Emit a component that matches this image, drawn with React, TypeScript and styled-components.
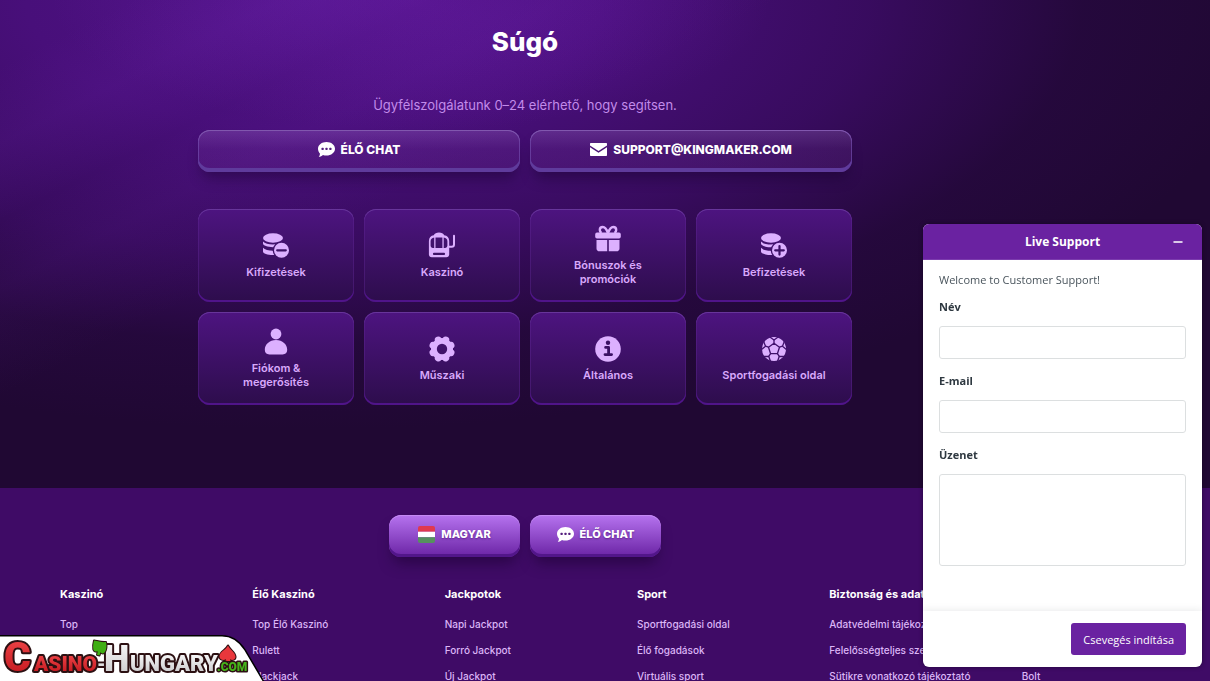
import React, { ReactNode } from 'react';
import styled, { createGlobalStyle } from 'styled-components';

const GlobalStyle = createGlobalStyle`
  *, *::before, *::after { box-sizing: border-box; }
  body { margin: 0; background: #3f0b66; font-family: Inter, 'Open Sans', sans-serif; color: #fff; }
  a { color: inherit; text-decoration: none; }
  button { font-family: inherit; cursor: pointer; }
  h1, h2, p, ul { margin: 0; padding: 0; }
  ul { list-style: none; }
`;

const Page = styled.div`
  display: flex;
  flex-direction: column;
  height: 100vh;
  overflow: hidden;
`;

const Main = styled.main`
  flex: none;
  padding: 24px 160px 83px 0;
  background:
    linear-gradient(153deg, transparent 6%, rgba(120, 40, 190, 0.1) 13%, transparent 20%, rgba(120, 40, 190, 0.08) 26%, transparent 36%),
    radial-gradient(ellipse 360px 130px at 34% 0, rgba(112, 30, 176, 0.4), transparent),
    radial-gradient(ellipse 960px 430px at 26% 0, #4f1486 0%, #480f7a 30%, rgba(60, 12, 102, 0.85) 58%, rgba(44, 9, 74, 0.4) 80%, transparent 100%),
    #200833;
`;

const Content = styled.div`
  display: flex;
  flex-direction: column;
  align-items: center;
  max-width: 654px;
  margin: 0 auto;
`;

const Title = styled.h1`
  font-size: 26px;
  line-height: 36px;
  font-weight: 800;
`;

const Lead = styled.p`
  margin-top: 36px;
  font-size: 13px;
  line-height: 18px;
  color: #c28bea;
`;

const Contacts = styled.div`
  display: grid;
  grid-template-columns: 1fr 1fr;
  gap: 10px;
  width: 100%;
  margin-top: 16px;
`;

const ContactLink = styled.a`
  display: flex;
  align-items: center;
  justify-content: center;
  gap: 6px;
  height: 42px;
  padding-bottom: 3px;
  border-radius: 12px;
  background: linear-gradient(rgba(190, 140, 230, 0.24), rgba(150, 80, 190, 0.14) 45%, rgba(130, 60, 170, 0.16));
  box-shadow:
    inset 0 1px 0 #8157ae,
    inset 0 -4px 0 #5f3b9c,
    inset 0 0 0 1px rgba(120, 84, 180, 0.6),
    0 10px 14px -4px rgba(20, 2, 40, 0.45);
  font-size: 12px;
  font-weight: 800;
  text-transform: uppercase;
`;

const Topics = styled.ul`
  display: grid;
  grid-template-columns: repeat(4, 1fr);
  gap: 10px;
  width: 100%;
  margin-top: 37px;
`;

const TopicLink = styled.a`
  display: flex;
  flex-direction: column;
  align-items: center;
  justify-content: center;
  gap: 5px;
  height: 93px;
  padding: 0 20px;
  border-radius: 12px;
  background: linear-gradient(#4d1480, #2d0d4c);
  box-shadow: inset 0 1px 0 #67359a, inset 0 -2px 0 #50148a, inset 0 0 0 1px rgba(98, 40, 150, 0.4);
  font-size: 11px;
  line-height: 14px;
  font-weight: 600;
  text-align: center;
  color: #d9a9fb;
`;

const Footer = styled.footer`
  flex: 1 0 auto;
  background: #3f0b66;
`;

const FooterActions = styled.div`
  display: flex;
  justify-content: center;
  gap: 10px;
  padding: 27px 160px 0 0;
`;

const PillButton = styled.button`
  display: flex;
  align-items: center;
  justify-content: center;
  gap: 6px;
  width: 131px;
  height: 42px;
  padding: 0 0 4px;
  border: 0;
  border-radius: 12px;
  background: linear-gradient(#b673ef, #6a23a4);
  box-shadow: inset 0 1px 0 #c48af4, inset 0 -3px 0 #52168a, 0 10px 14px -4px rgba(26, 2, 46, 0.55);
  color: #fff;
  font-size: 11px;
  font-weight: 800;
  text-transform: uppercase;
  text-shadow: 0 1px 2px rgba(50, 0, 90, 0.5);
`;

const FooterNav = styled.nav`
  display: grid;
  grid-template-columns: repeat(6, 1fr);
  gap: 16px;
  padding: 28px 12px 16px 60px;
`;

const ColumnTitle = styled.h2`
  min-height: 18px;
  margin-bottom: 8px;
  font-size: 11px;
  line-height: 18px;
  font-weight: 700;
  white-space: nowrap;
`;

const FooterLink = styled.a`
  display: block;
  font-size: 10px;
  line-height: 26px;
  font-weight: 500;
  white-space: nowrap;
  color: #dcb6f7;
`;

const Sponsor = styled.a`
  position: fixed;
  left: 0;
  bottom: 0;
  height: 47px;
  svg { display: block; }
`;

const Widget = styled.section`
  position: fixed;
  right: 8px;
  bottom: 14px;
  width: 279px;
  border-radius: 6px;
  overflow: hidden;
  background: #fff;
  box-shadow: 0 0 4px rgba(10, 0, 20, 0.5);
  font-family: 'Open Sans', 'Noto Sans', sans-serif;
  color: #49545c;
`;

const WidgetHeader = styled.header`
  display: grid;
  grid-template-columns: 32px 1fr 32px;
  align-items: center;
  height: 36px;
  padding: 0 8px;
  background: #6a22a1;
  border-bottom: 1px solid #7c3cae;
  color: #fff;
`;

const WidgetTitle = styled.h2`
  grid-column: 2;
  font-size: 12px;
  line-height: 16px;
  font-weight: 700;
  text-align: center;
`;

const MinimizeButton = styled.button`
  display: flex;
  align-items: center;
  justify-content: center;
  height: 32px;
  padding: 0;
  border: 0;
  background: none;
  color: #fff;
`;

const WidgetBody = styled.div`
  display: flex;
  flex-direction: column;
  gap: 14px;
  padding: 12px 16px 45px;
  font-size: 11px;
  line-height: 16px;
`;

const Welcome = styled.p`
  margin-bottom: -3px;
`;

const Field = styled.label`
  display: flex;
  flex-direction: column;
  gap: 11px;
  font-weight: 700;
  color: #2f3941;
`;

const TextInput = styled.input`
  width: 100%;
  height: 33px;
  padding: 0 10px;
  border: 1px solid #dcdfe0;
  border-radius: 3px;
  background: #fff;
`;

const MessageInput = styled.textarea`
  display: block;
  width: 100%;
  height: 92px;
  padding: 8px 10px;
  border: 1px solid #dcdfe0;
  border-radius: 3px;
  background: #fff;
  resize: none;
`;

const WidgetFooter = styled.footer`
  display: flex;
  justify-content: flex-end;
  padding: 12px 16px;
  box-shadow: 0 0 8px rgba(40, 50, 60, 0.12);
`;

const SubmitButton = styled.button`
  height: 32px;
  padding: 0 12px;
  border: 0;
  border-radius: 3px;
  background: #6a22a1;
  color: #fff;
  font-size: 11px;
`;

const Icon = ({ children }: { children: ReactNode }) => (
  <svg width="28" height="28" viewBox="0 0 28 28" fill="#dcb0ff" aria-hidden="true">{children}</svg>
);

const Coins = ({ plus }: { plus?: boolean }) => {
  const id = plus ? 'coins-plus' : 'coins-minus';
  return (
    <Icon>
      <mask id={id}>
        <rect width="28" height="28" fill="#fff" />
        <circle cx="19.5" cy="18.3" r="8.8" fill="#000" />
      </mask>
      <g mask={`url(#${id})`}>
        <ellipse cx="11" cy="6" rx="10" ry="4.7" />
        <path d="M1 9.6c1.8 2 5.6 3 10 3 3.6 0 6.6-.7 8.6-2v4.600H11c-5.500 0-10-1.600-10-3.600z" />
        <path d="M1 15.800c1.800 2 5.600 3 10 3h3v4.200h-3c-5.500 0-10-1.600-10-3.600z" />
      </g>
      <circle cx="19.5" cy="18.3" r="7.5" />
      <path d={plus ? 'M15.200 18.300h8.600M19.500 14v8.600' : 'M15.200 18.300h8.600'} stroke="#3b1064" strokeWidth="2.2" strokeLinecap="round" />
    </Icon>
  );
};

const Slot = () => (
  <Icon>
    <path fillRule="evenodd" d="M5.800 3.200C6.600 1.300 8.500.5 11 .5s4.400.8 5.200 2.700c3.100.3 5 2.500 5 5.800v13.500c0 1.600-1.200 2.800-2.800 2.800H3.700C2.100 25.300.9 24.100.9 22.500V9c0-3.300 1.900-5.500 4.900-5.800zM6.200 5.500C4 5.700 2.600 7.200 2.600 9.200v4.300c0 1.500.9 2.400 2.400 2.400h1.200zM7.500 5.500v10.400h6.900V5.500zM15.700 5.500v10.400H17c1.500 0 2.400-.9 2.400-2.400V9.200c0-2-1.300-3.500-3.700-3.700zM6 20.800a1.100 1.100 0 0 0 0 2.200h10a1.100 1.100 0 0 0 0-2.200z" />
    <path d="M20.500 14.800h3.200c1.500 0 2.300-.8 2.300-2.300V3.700" fill="none" stroke="#dcb0ff" strokeWidth="2" strokeLinecap="round" />
  </Icon>
);

const Gift = () => (
  <Icon>
    <path d="M14 8C12.500 4 11 2 8.800 2 7 2 5.800 3.400 5.800 5c0 1.200.6 2.200 1.600 3M14 8c1.500-4 3-6 5.200-6 1.800 0 3 1.400 3 3 0 1.200-.6 2.200-1.600 3" fill="none" stroke="#dcb0ff" strokeWidth="2.4" />
    <rect x="1.200" y="7.600" width="25.600" height="6" rx="1.800" />
    <path d="M2.500 14.900h10.700v11.400H5.500c-1.700 0-3-1.200-3-2.900zM14.800 14.900h10.700v8.500c0 1.700-1.300 2.900-3 2.900h-7.700z" />
  </Icon>
);

const Person = () => (
  <Icon>
    <circle cx="14" cy="6" r="5.400" />
    <path d="M14 12c6.500 0 11.200 4.500 11.200 9.800 0 2.900-1.700 4.600-4.600 4.600H7.400c-2.900 0-4.600-1.700-4.600-4.600C2.800 16.500 7.500 12 14 12z" />
  </Icon>
);

const lobeAngles = [22.5, 67.5, 112.5, 157.5, 202.5, 247.5, 292.5, 337.5];
const Gear = () => (
  <Icon>
    <mask id="gear-hole">
      <rect width="28" height="28" fill="#fff" />
      <circle cx="14" cy="14" r="5.200" fill="#000" />
    </mask>
    <g mask="url(#gear-hole)">
      <circle cx="14" cy="14" r="11" />
      {lobeAngles.map((a) => (
        <circle key={a} cx="23.700" cy="14" r="3.500" transform={`rotate(${a} 14 14)`} />
      ))}
    </g>
  </Icon>
);

const Info = () => (
  <Icon>
    <circle cx="14" cy="14" r="12.800" />
    <circle cx="14" cy="7.800" r="2.200" fill="#3b1064" />
    <path d="M11.600 12.400h3v7M11 19.600h6.600" fill="none" stroke="#3b1064" strokeWidth="2.800" strokeLinecap="round" strokeLinejoin="round" />
  </Icon>
);

const Football = () => (
  <Icon>
    <mask id="ball-seams">
      <circle cx="14" cy="14" r="12" fill="#fff" />
      <g fill="none" stroke="#000" strokeWidth="1.300" strokeLinejoin="round">
        <path d="M14 8.200l5.500 4-2.100 6.500h-6.800l-2.100-6.500z" />
        <path d="M14 8.200V5M19.500 12.200l3-1M17.400 18.700l1.900 2.600M10.600 18.700l-1.900 2.600M8.500 12.200l-3-1" />
        <path d="M9.800 2L14 5l4.200-3M24.500 6l-2 5.200L27 15M24.500 21.500l-5.200-.2-2 5.700M10.700 27l-2-5.700-5.200.2M1 15l4.500-3.800-2-5.200" />
      </g>
    </mask>
    <rect width="28" height="28" mask="url(#ball-seams)" />
  </Icon>
);

const ChatBubble = () => (
  <svg width="17" height="17" viewBox="0 0 17 17" aria-hidden="true">
    <path d="M8.500 1C13.200 1 17 3.900 17 7.800s-3.800 6.800-8.500 6.800c-1.300 0-2.500-.2-3.600-.6C3.900 14.800 2.400 16 .8 16c.8-.9 1.200-2.200 1.100-3.400C.7 11.300 0 9.600 0 7.800 0 3.900 3.800 1 8.500 1z" fill="#fff" />
    <g fill="#55207f">
      <rect x="3.400" y="6.700" width="2.400" height="2.400" rx=".8" />
      <rect x="7.300" y="6.700" width="2.400" height="2.400" rx=".8" />
      <rect x="11.200" y="6.700" width="2.400" height="2.400" rx=".8" />
    </g>
  </svg>
);

const Envelope = () => (
  <svg width="17" height="17" viewBox="0 0 17 17" fill="#fff" aria-hidden="true">
    <path d="M1 2h15c.6 0 1 .4 1 1v1.500L8.500 10 0 4.500V3c0-.6.4-1 1-1z" />
    <path d="M0 6.200L8.500 11.700 17 6.200V14c0 .6-.4 1-1 1H1c-.6 0-1-.4-1-1z" />
  </svg>
);

const HungarianFlag = () => (
  <svg width="17" height="17" viewBox="0 0 17 17" aria-hidden="true">
    <clipPath id="flag-shape"><rect width="17" height="17" rx="2" /></clipPath>
    <g clipPath="url(#flag-shape)">
      <path fill="#e0394f" d="M0 0h17v5.700H0z" />
      <path fill="#fff" d="M0 5.700h17v5.600H0z" />
      <path fill="#56915e" d="M0 11.300h17V17H0z" />
    </g>
  </svg>
);

const SponsorLogo = () => (
  <svg width="268" height="47" viewBox="0 0 268 47" role="img" aria-label="Casino-Hungary.com">
    <defs>
      <linearGradient id="red-fill" x1="0" y1="0" x2="0" y2="1">
        <stop offset="0" stopColor="#f4494c" />
        <stop offset="1" stopColor="#bd1219" />
      </linearGradient>
      <linearGradient id="silver-fill" x1="0" y1="0" x2="0" y2="1">
        <stop offset="0" stopColor="#fff" />
        <stop offset="1" stopColor="#c4c4c6" />
      </linearGradient>
    </defs>
    <path d="M-2 1.800H222c10 0 17 5 23 14l20 34H-2z" fill="#fff" stroke="#000" strokeWidth="1.500" />
    <g fontFamily="Roboto, 'Liberation Sans', sans-serif" fontWeight="900" stroke="#2c1012" strokeWidth="4" strokeLinejoin="round" paintOrder="stroke">
      <text x="4" y="37" fontSize="41" fill="url(#red-fill)">C</text>
      <text x="34" y="37" fontSize="21" fill="url(#red-fill)">ASINO</text>
      <text x="97" y="37" fontSize="20" fill="url(#silver-fill)">-</text>
      <text x="104" y="37" fontSize="36" fill="url(#silver-fill)">H</text>
      <text x="130" y="37" fontSize="22" fill="url(#silver-fill)">UNGARY</text>
      <path d="M94 6.500c5 1 8 2 12 1.500 1 4.500.5 8-1.500 10.500-1.500 1.500-3.500 1-4-.5l-1 3.500-2.500-.8.800-3.500c-2 1-4 0-4.500-2-.5-3 0-6 .7-8.700z" fill="#3fae12" strokeWidth="2" />
      <path d="M228 11.500c2 4.500 7 6.500 7.500 11 .3 3-3.500 4.500-5.500 2.500l.5 2h-5l.5-2c-2.500 2-6.500.5-6.500-2.500 0-5 6.500-6.500 8.500-11z" fill="#e8373c" strokeWidth="2" />
      <text x="217" y="37" fontSize="12" strokeWidth="3" fill="#45b51a">.COM</text>
    </g>
  </svg>
);

const topics = [
  { label: 'Kifizetések', icon: <Coins /> },
  { label: 'Kaszinó', icon: <Slot /> },
  { label: 'Bónuszok és promóciók', icon: <Gift /> },
  { label: 'Befizetések', icon: <Coins plus /> },
  { label: 'Fiókom & megerősítés', icon: <Person /> },
  { label: 'Műszaki', icon: <Gear /> },
  { label: 'Általános', icon: <Info /> },
  { label: 'Sportfogadási oldal', icon: <Football /> },
];

const columns = [
  { title: 'Kaszinó', links: ['Top'] },
  { title: 'Élő Kaszinó', links: ['Top Élő Kaszinó', 'Rulett', 'Blackjack'] },
  { title: 'Jackpotok', links: ['Napi Jackpot', 'Forró Jackpot', 'Új Jackpot'] },
  { title: 'Sport', links: ['Sportfogadási oldal', 'Élő fogadások', 'Virtuális sport'] },
  { title: 'Biztonság és adatvédelem', links: ['Adatvédelmi tájékoztató', 'Felelősségteljes szerencsejáték', 'Sütikre vonatkozó tájékoztató'] },
  { title: '', links: ['', '', 'Bolt'] },
];

export default function App() {
  return (
    <Page>
      <GlobalStyle />
      <Main>
        <Content>
          <Title>Súgó</Title>
          <Lead>Ügyfélszolgálatunk 0–24 elérhető, hogy segítsen.</Lead>
          <Contacts>
            <ContactLink href="#chat"><ChatBubble />Élő chat</ContactLink>
            <ContactLink href="mailto:support@kingmaker.com"><Envelope />support@kingmaker.com</ContactLink>
          </Contacts>
          <Topics>
            {topics.map((t) => (
              <li key={t.label}>
                <TopicLink href="#topic">{t.icon}<span>{t.label}</span></TopicLink>
              </li>
            ))}
          </Topics>
        </Content>
      </Main>
      <Footer>
        <FooterActions>
          <PillButton type="button"><HungarianFlag />Magyar</PillButton>
          <PillButton type="button"><ChatBubble />Élő chat</PillButton>
        </FooterActions>
        <FooterNav>
          {columns.map((c, i) => (
            <div key={i}>
              <ColumnTitle as={c.title ? 'h2' : 'div'}>{c.title}</ColumnTitle>
              <ul>
                {c.links.map((l, j) => (
                  <li key={j}>{l ? <FooterLink href="#link">{l}</FooterLink> : <FooterLink as="span">&nbsp;</FooterLink>}</li>
                ))}
              </ul>
            </div>
          ))}
        </FooterNav>
      </Footer>
      <Sponsor href="#sponsor"><SponsorLogo /></Sponsor>
      <Widget aria-label="Live Support">
        <WidgetHeader>
          <WidgetTitle>Live Support</WidgetTitle>
          <MinimizeButton type="button" aria-label="Minimize">
            <svg width="10" height="10" viewBox="0 0 10 10" aria-hidden="true"><path d="M1 5h8" stroke="#fff" strokeWidth="1.500" strokeLinecap="round" /></svg>
          </MinimizeButton>
        </WidgetHeader>
        <WidgetBody>
          <Welcome>Welcome to Customer Support!</Welcome>
          <Field>Név<TextInput type="text" /></Field>
          <Field>E-mail<TextInput type="email" /></Field>
          <Field>Üzenet<MessageInput /></Field>
        </WidgetBody>
        <WidgetFooter>
          <SubmitButton type="button">Csevegés indítása</SubmitButton>
        </WidgetFooter>
      </Widget>
    </Page>
  );
}
